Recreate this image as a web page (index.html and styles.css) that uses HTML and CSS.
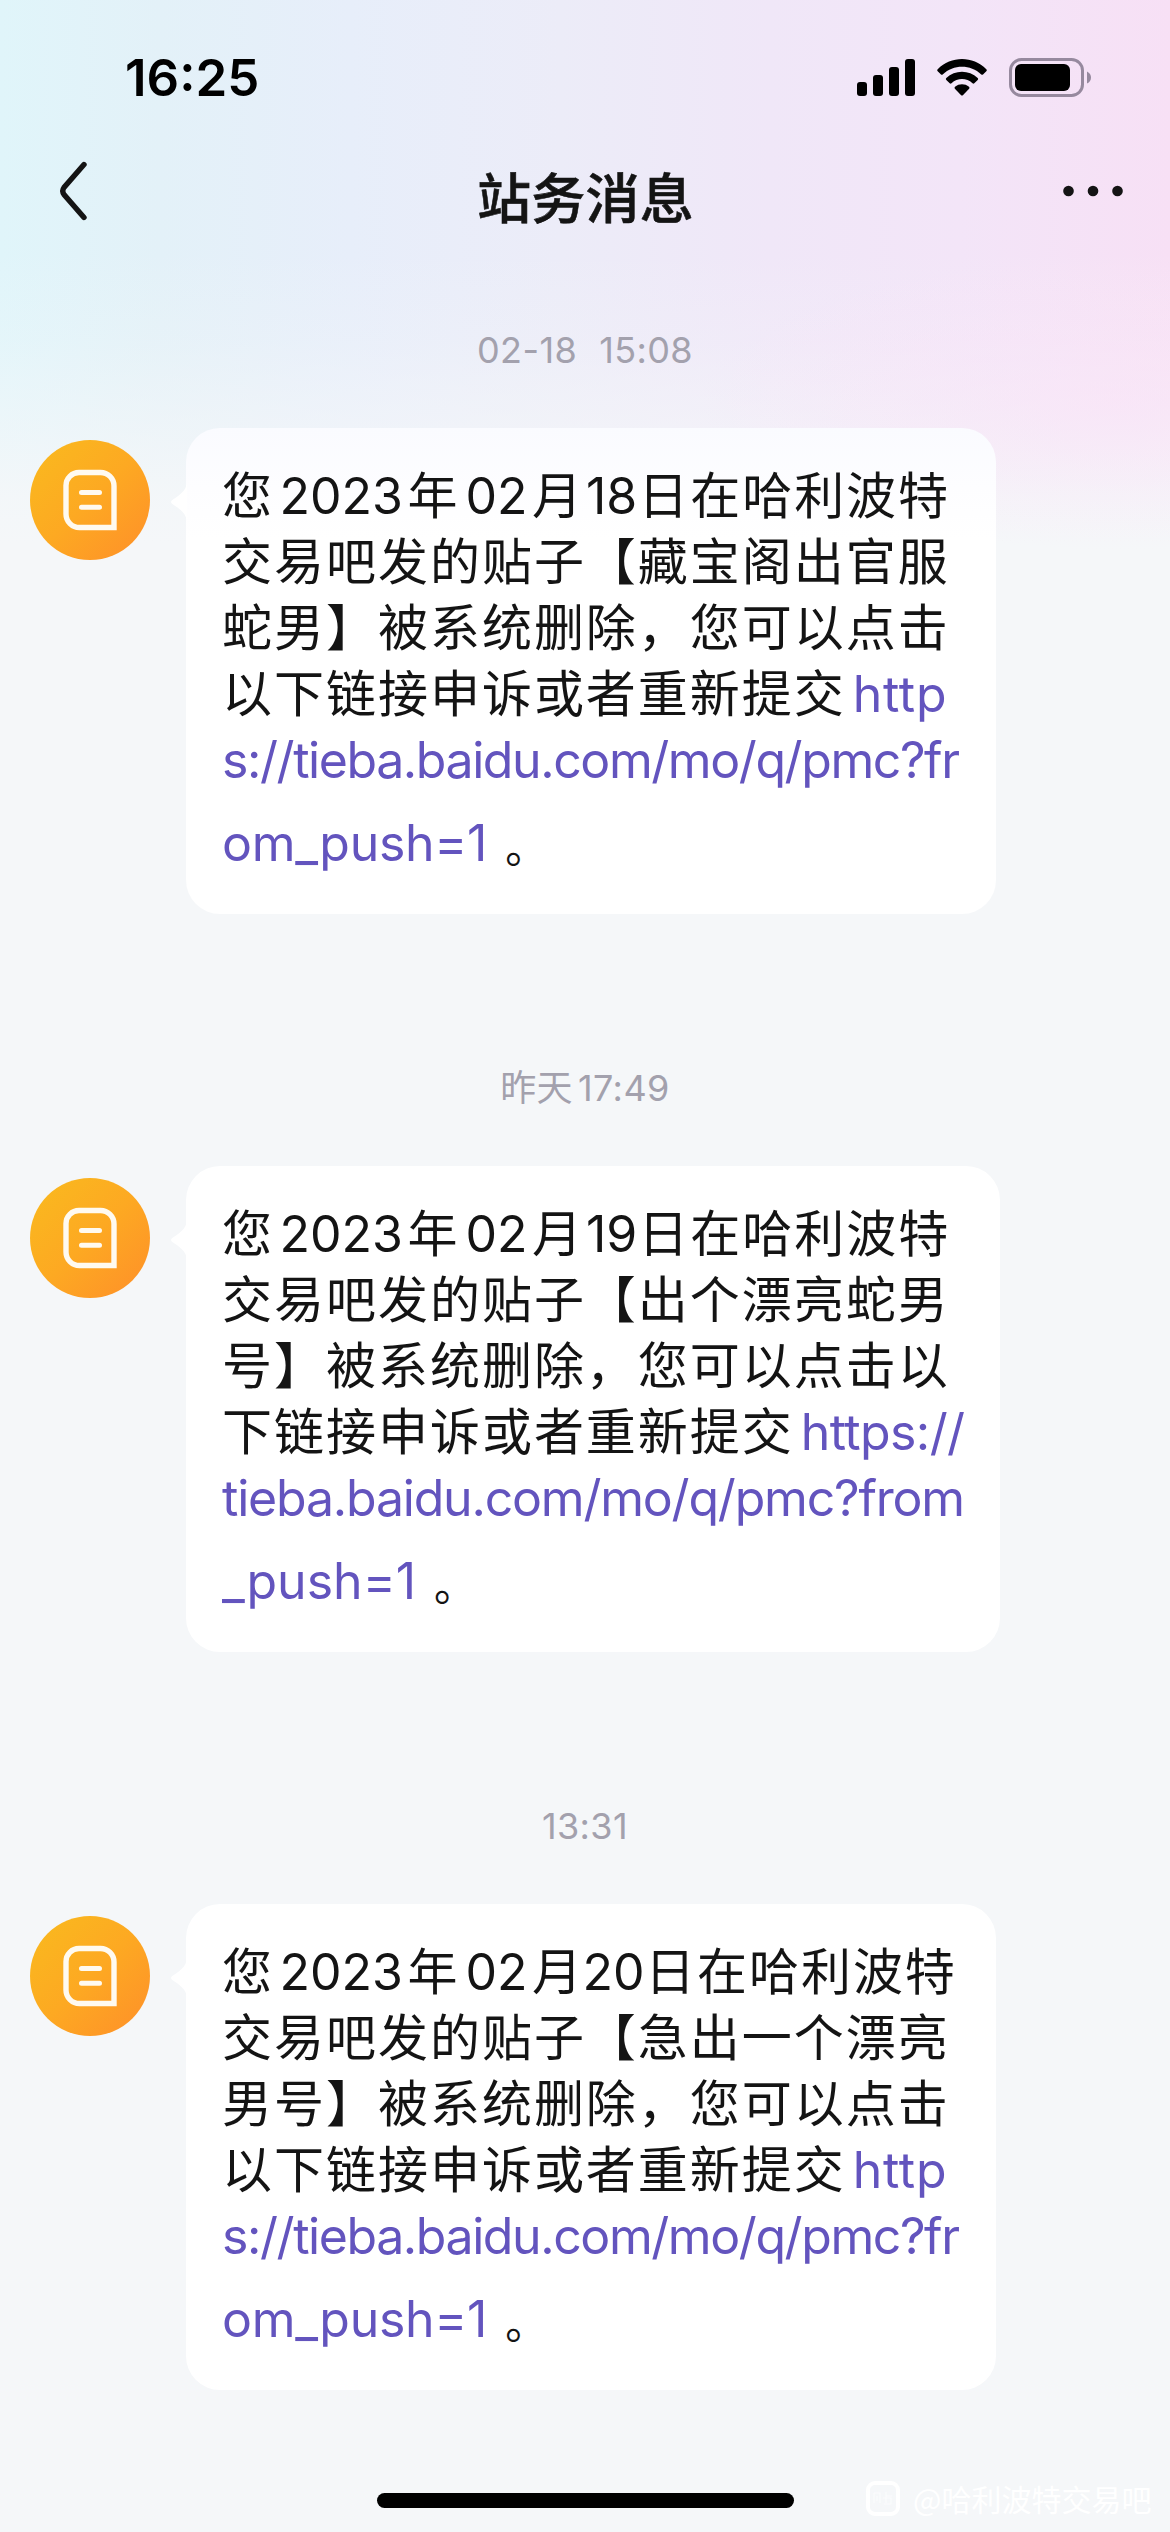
FILE: index.html
```html
<!DOCTYPE html>
<html lang="zh-CN">
<head>
<meta charset="utf-8">
<title>站务消息</title>
<link rel="stylesheet" href="styles.css">
</head>
<body>
<svg class="defs" width="0" height="0" aria-hidden="true">
  <defs>
    <linearGradient id="amber" x1="0.1" y1="0.1" x2="0.9" y2="0.9">
      <stop offset="0" stop-color="#fab71f"/>
      <stop offset="0.5" stop-color="#fda922"/>
      <stop offset="1" stop-color="#fe9428"/>
    </linearGradient>
    <symbol id="avatar" viewBox="0 0 120 120">
      <circle cx="60" cy="60" r="60" fill="url(#amber)"/>
      <path d="M49 32.500H70.500A13.500 13.500 0 0 1 84 46V87.500H49.500A13.500 13.500 0 0 1 36 74V45.500A13 13 0 0 1 49 32.500Z" fill="none" stroke="#fffaf0" stroke-width="5.400"/>
      <path d="M51.500 52.500H69.500M51.500 67.200H69.500" fill="none" stroke="#fffaf0" stroke-width="5" stroke-linecap="round"/>
    </symbol>
    <symbol id="tail" viewBox="0 0 17 44">
      <path d="M17 0C17 9 13 13 3 19.500Q-1 22 3 24.500C13 31 17 35 17 44Z" fill="#fff"/>
    </symbol>
  </defs>
</svg>
<div class="screen">
  <header>
    <div class="status">
      <time class="clock">16:25</time>
      <div class="indicators">
        <svg width="58" height="38" viewBox="0 0 58 38">
          <rect x="0" y="23" width="10" height="14" rx="3"/>
          <rect x="16" y="16" width="10" height="21" rx="3"/>
          <rect x="32" y="8" width="10" height="29" rx="3"/>
          <rect x="48" y="0" width="10" height="37" rx="3"/>
        </svg>
        <svg width="50" height="38" viewBox="0 0 50 38">
          <path d="M0.700 10.200C14-3.400 36-3.400 49.300 10.200Q50.300 11.200 49.300 12.200L46 15.500Q45.200 16.200 44.300 15.400C33.500 5.100 16.500 5.100 5.700 15.400Q4.800 16.200 4 15.500L0.700 12.200Q-0.300 11.200 0.700 10.200Z"/>
          <path d="M9.300 19C18 10.800 32 10.800 40.700 19Q41.700 20 40.700 21L37.300 24.300Q36.500 25 35.500 24.200C29.500 18.700 20.500 18.700 14.500 24.200Q13.500 25 12.700 24.300L9.300 21Q8.300 20 9.300 19Z"/>
          <path d="M18 27.800C22 24.500 28 24.500 32 27.800Q33 28.700 32.100 29.700L25.900 36.200Q25 37 24.100 36.200L17.900 29.700Q17 28.700 18 27.800Z"/>
        </svg>
        <svg width="82" height="40" viewBox="0 0 82 40">
          <rect x="1.500" y="1.500" width="72" height="36" rx="11" fill="none" stroke="#96899e" stroke-width="3"/>
          <rect x="6" y="6" width="55" height="27" rx="6"/>
          <path d="M78 13.500Q82 15.500 82 19.500T78 25.500Z" fill="#96899e"/>
        </svg>
      </div>
    </div>
    <nav>
      <svg class="back" width="28" height="60" viewBox="0 0 28 60"><path d="M24 3.500L4 26.500Q1.500 30 4 33.500L24 56.500" fill="none" stroke="#141414" stroke-width="5.400" stroke-linecap="round"/></svg>
      <h1>站务消息</h1>
      <svg class="more" width="60" height="12" viewBox="0 0 60 12"><g fill="#141414"><circle cx="5.500" cy="6" r="5.300"/><circle cx="30" cy="6" r="5.300"/><circle cx="54.500" cy="6" r="5.300"/></g></svg>
    </nav>
  </header>

  <main>
    <section>
      <time class="stamp"><span class="date">02-18</span><span>15:08</span></time>
      <div class="row">
        <svg class="avatar"><use href="#avatar"/></svg>
        <div class="bubble first">
          <svg class="tail"><use href="#tail"/></svg>
          <p>您<span class="year">2023</span>年<span class="month">02</span>月<span class="day">18</span>日在哈利波特</p>
          <p>交易吧发的贴子【藏宝阁出官服</p>
          <p>蛇男】被系统删除，您可以点击</p>
          <p>以下链接申诉或者重新提交<a class="http">http</a></p>
          <p><a class="url">s://tieba.baidu.com/mo/q/pmc?fr</a></p>
          <p class="last"><a class="push">om_push=1</a><span class="stop">。</span></p>
        </div>
      </div>
    </section>

    <section>
      <time class="stamp"><span class="cn">昨天</span><span>17:49</span></time>
      <div class="row">
        <svg class="avatar"><use href="#avatar"/></svg>
        <div class="bubble wide">
          <svg class="tail"><use href="#tail"/></svg>
          <p>您<span class="year">2023</span>年<span class="month">02</span>月<span class="day">19</span>日在哈利波特</p>
          <p>交易吧发的贴子【出个漂亮蛇男</p>
          <p>号】被系统删除，您可以点击以</p>
          <p>下链接申诉或者重新提交<a class="https">https://</a></p>
          <p><a class="url from">tieba.baidu.com/mo/q/pmc?from</a></p>
          <p class="last"><a>_push=1</a><span class="stop">。</span></p>
        </div>
      </div>
    </section>

    <section>
      <time class="stamp"><span>13:31</span></time>
      <div class="row">
        <svg class="avatar"><use href="#avatar"/></svg>
        <div class="bubble">
          <svg class="tail"><use href="#tail"/></svg>
          <p>您<span class="year">2023</span>年<span class="month">02</span>月<span class="day twenty">20</span>日在哈利波特</p>
          <p>交易吧发的贴子【急出一个漂亮</p>
          <p>男号】被系统删除，您可以点击</p>
          <p>以下链接申诉或者重新提交<a class="http">http</a></p>
          <p><a class="url">s://tieba.baidu.com/mo/q/pmc?fr</a></p>
          <p class="last"><a class="push">om_push=1</a><span class="stop">。</span></p>
        </div>
      </div>
    </section>
  </main>

  <div class="home"></div>
  <div class="watermark">
    <svg width="34" height="35" viewBox="0 0 34 35"><rect x="2" y="2" width="30" height="31" rx="7" fill="none" stroke="#fff" stroke-width="4"/><path d="M8 12H14V22M8 12V22M11 15V20M20 11V22M20 15H26M17 17H25V23H18" fill="none" stroke="#fff" stroke-width="1.200" opacity="0.600"/></svg>
    <span>@哈利波特交易吧</span>
  </div>
</div>
</body>
</html>
```
FILE: styles.css
```css
* {
  box-sizing: border-box;
}

body {
  margin: 0;
  background: #f5f7f9;
  color: #141414;
  font-family: Inter, "Noto Sans CJK SC", sans-serif;
}

svg {
  display: block;
  flex: none;
}

.defs {
  position: absolute;
}

.screen {
  position: relative;
  width: 1170px;
  height: 2532px;
  overflow: hidden;
  background:
    radial-gradient(ellipse 420px 150px at 1120px 400px, rgba(250, 226, 247, 0.6), rgba(250, 226, 247, 0)),
    linear-gradient(180deg, rgba(245, 247, 249, 0) 250px, rgba(245, 247, 249, 0.2) 340px, rgba(245, 247, 249, 0.6) 430px, rgba(245, 247, 249, 0.9) 495px, #f5f7f9 545px),
    linear-gradient(90deg, #e0f5fa 0, #e3f1f8 160px, #e7eefa 350px, #ececf8 560px, #f0e7f8 770px, #f3e5f8 960px, #f7e0f5 1170px);
}

.status {
  display: flex;
  justify-content: space-between;
  height: 156px;
  padding: 58px 79px 0 125px;
}

.clock {
  font-size: 51px;
  line-height: 40px;
  font-weight: 600;
  color: #000;
}

.indicators {
  display: flex;
  align-items: flex-start;
  gap: 22px;
}

.indicators svg:nth-child(-n+2) {
  margin-top: 1px;
}

nav {
  display: grid;
  grid-template-columns: 1fr auto 1fr;
  align-items: center;
  height: 70px;
  padding: 0 47px 0 60px;
}

.more {
  justify-self: end;
}

h1 {
  margin: 9px 12px 0 0;
  font: 500 54px/61px "Noto Sans CJK SC", sans-serif;
  letter-spacing: 0.2px;
  -webkit-text-stroke: 0.6px #141414;
}

section {
  height: 738px;
}

main {
  padding-top: 100px;
}

.stamp {
  display: flex;
  justify-content: center;
  height: 102px;
  font-size: 36px;
  line-height: 48px;
  letter-spacing: 0.4px;
  color: #a3a1ad;
}

.date {
  margin-right: 22px;
}

.cn {
  margin-right: 5px;
}

.row {
  display: flex;
  align-items: flex-start;
  gap: 36px;
  padding-left: 30px;
}

.avatar {
  width: 120px;
  height: 120px;
  margin-top: 12px;
}

.bubble {
  position: relative;
  width: 810px;
  height: 486px;
  padding: 35px 36px 0;
  border-radius: 34px;
  background: #fff;
}

.wide {
  width: 814px;
}

.first {
  background: linear-gradient(180deg, #fafbff 0, #fdfdff 60px, #fff 110px);
}

.tail {
  position: absolute;
  left: -16px;
  top: 52px;
  width: 17px;
  height: 44px;
}

p {
  margin: 0;
  font-size: 50px;
  line-height: 66px;
  letter-spacing: 1.98px;
  white-space: nowrap;
}

p span,
a {
  letter-spacing: 0;
}

a {
  color: #6354be;
}

.year {
  margin: 0 4.5px 0 5.5px;
}

.month {
  margin: 0 4.5px 0 6px;
}

.day {
  margin: 0 1px 0 2px;
}

.twenty {
  margin: 0 0.5px 0 -1.5px;
}

.http {
  margin-left: 7px;
  letter-spacing: 0.7px;
}

.https {
  margin-left: 7px;
  letter-spacing: -0.6px;
}

.url {
  letter-spacing: -1.42px;
}

.from {
  letter-spacing: -1.2px;
}

.push {
  letter-spacing: -0.3px;
}

.last {
  margin-top: 17px;
}

.stop {
  margin-left: 18px;
  font-size: 42px;
  line-height: 1px;
  vertical-align: -2px;
}

.home {
  position: absolute;
  left: 377px;
  bottom: 24px;
  width: 417px;
  height: 15px;
  border-radius: 8px;
  background: #000;
}

.watermark {
  position: absolute;
  left: 866px;
  bottom: 14px;
  display: flex;
  align-items: center;
  gap: 13px;
  color: #fff;
  font: 400 30px/40px "Noto Sans CJK SC", sans-serif;
}
```
